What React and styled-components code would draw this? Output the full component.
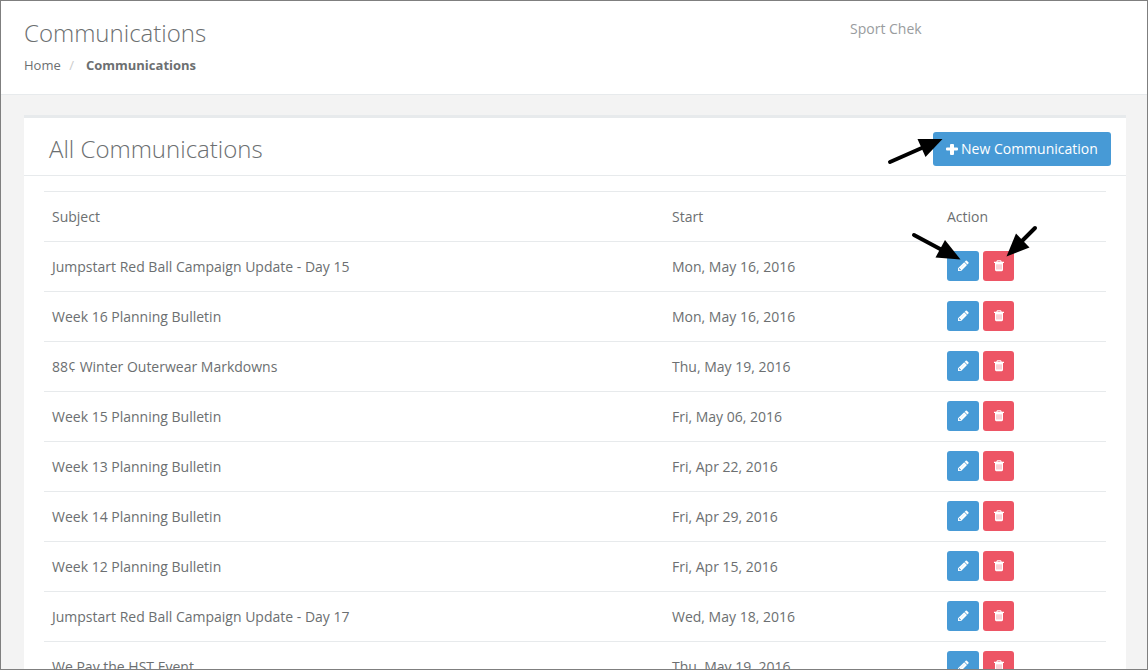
import React from "react";
import styled, { createGlobalStyle } from "styled-components";

const GlobalStyle = createGlobalStyle`
  * { box-sizing: border-box; }
  html, body { margin: 0; padding: 0; overflow: hidden; }
  body {
    font-family: "Open Sans", "Noto Sans", sans-serif;
    font-size: 14px;
    line-height: 20px;
    color: #6c6f71;
    background: #f3f3f3;
  }
`;

const Frame = styled.div`
  position: relative;
  width: 1148px;
  height: 670px;
  overflow: hidden;
  border: 1px solid #7f7f7f;
  background: #f3f3f3;
`;

const PageHeader = styled.header`
  display: flex;
  height: 94px;
  padding: 0 23px;
  background: #fff;
  border-bottom: 1px solid #e7eaec;
`;

const Heading = styled.div`
  width: 826px;
  padding-top: 17px;
`;

const PageTitle = styled.h1`
  margin: 0;
  font-size: 24px;
  font-weight: 300;
  line-height: 30px;
`;

const Breadcrumb = styled.nav`
  display: flex;
  margin-top: 7px;
  font-size: 13px;
  line-height: 20px;
`;

const Separator = styled.span`
  padding: 0 12px 0 8.4px;
  color: #ccc;
`;

const Banner = styled.span`
  padding-top: 18px;
  color: #999c9e;
`;

const Card = styled.main`
  margin: 20px 21px 0 23px;
  height: 700px;
  background: #fff;
  border-top: 3px solid #e7eaec;
`;

const CardHeader = styled.div`
  display: flex;
  justify-content: space-between;
  height: 58px;
  padding: 14px 15px 0 25px;
  border-bottom: 1px solid #e7eaec;
`;

const CardTitle = styled.h2`
  margin: 1px 0 0;
  font-size: 24px;
  font-weight: 300;
  line-height: 32px;
`;

const NewButton = styled.button`
  display: flex;
  align-items: center;
  gap: 3px;
  width: 178px;
  height: 34px;
  padding: 0 0 0 13px;
  border: 0;
  border-radius: 3px;
  background: #479ad6;
  color: #fff;
  font: inherit;
  white-space: nowrap;
`;

const Table = styled.div`
  margin: 15px 20px 0;
`;

const Row = styled.div`
  display: grid;
  grid-template-columns: 620px 275px 167px;
  height: 50px;
  border-top: 1px solid #e7eaec;
`;

const Cell = styled.div`
  padding: 15px 8px 0;
  line-height: 20px;
  white-space: nowrap;
`;

const Actions = styled.div`
  display: flex;
  gap: 4px;
  padding: 9px 8px 0;
`;

const ActionButton = styled.button`
  display: flex;
  align-items: flex-start;
  width: ${(p) => (p.$danger ? "31px" : "32px")};
  height: 30px;
  padding: 9px 0 0 ${(p) => (p.$danger ? "11px" : "10px")};
  border: 0;
  border-radius: 3px;
  color: #fff;
  background: ${(p) => (p.$danger ? "#ed5565" : "#479ad6")};
`;

const Glyph = styled.svg`
  display: block;
  flex: none;
  width: ${(p) => p.$w}px;
  height: ${(p) => p.$h}px;
  fill: currentColor;
`;

const Arrows = styled.svg`
  position: absolute;
  left: -1px;
  top: -1px;
  pointer-events: none;
`;

const Plus = () => (
  <Glyph $w={12} $h={12} viewBox="0 0 12 12">
    <path d="M5 1h2q1 0 1 1v2.4h3q1 0 1 1v1.2q0 1-1 1h-3v3.4q0 1-1 1h-2q-1 0-1-1v-3.4h-3q-1 0-1-1v-1.2q0-1 1-1h3v-2.4q0-1 1-1z" />
  </Glyph>
);

const Pencil = () => (
  <Glyph $w={12} $h={12} viewBox="0 0 12 12">
    <path
      fillRule="evenodd"
      d="M7.2 2.2L10 5L4.1 10.9Q3.9 11.1 3.6 11.1H1V8.5Q1 8.3 1.2 8.1ZM1.9 8.7V9.5H2.7V10.3H3.4L4 9.7L2.5 8.1Z"
    />
    <path d="M7.7 1.7L8.7.7Q9.3.1 9.9.7L11.4 2.2Q12 2.8 11.4 3.4L10.4 4.4Z" />
    <path d="M4 7.7L7.4 4.3" stroke="#479ad6" strokeOpacity=".35" strokeWidth=".5" />
  </Glyph>
);

const Trash = () => (
  <Glyph $w={10} $h={12} viewBox="0 0 10 12">
    <path
      fillRule="evenodd"
      d="M3.4.3h3.2q.5 0 .7.5l.4 1H10v1.2H9v6.8q0 1.4-1.2 1.4H2.2Q1 11.200 1 9.800V3H0V1.800h2.300l.4-1q.2-.5.7-.5zM3.700 1.200L3.400 1.800h3.200L6.300 1.200z"
    />
    <path
      d="M3 4.300v5.200M5 4.300v5.200M7 4.300v5.200"
      stroke="#ed5565"
      strokeOpacity=".7"
      strokeWidth=".8"
    />
  </Glyph>
);

const rows = [
  ["Jumpstart Red Ball Campaign Update - Day 15", "Mon, May 16, 2016"],
  ["Week 16 Planning Bulletin", "Mon, May 16, 2016"],
  ["88¢ Winter Outerwear Markdowns", "Thu, May 19, 2016"],
  ["Week 15 Planning Bulletin", "Fri, May 06, 2016"],
  ["Week 13 Planning Bulletin", "Fri, Apr 22, 2016"],
  ["Week 14 Planning Bulletin", "Fri, Apr 29, 2016"],
  ["Week 12 Planning Bulletin", "Fri, Apr 15, 2016"],
  ["Jumpstart Red Ball Campaign Update - Day 17", "Wed, May 18, 2016"],
  ["We Pay the HST Event", "Thu, May 19, 2016"],
];

export default function App() {
  return (
    <>
      <GlobalStyle />
      <Frame>
        <PageHeader>
          <Heading>
            <PageTitle>Communications</PageTitle>
            <Breadcrumb>
              <span>Home</span>
              <Separator>/</Separator>
              <strong>Communications</strong>
            </Breadcrumb>
          </Heading>
          <Banner>Sport Chek</Banner>
        </PageHeader>
        <Card>
          <CardHeader>
            <CardTitle>All Communications</CardTitle>
            <NewButton>
              <Plus />
              New Communication
            </NewButton>
          </CardHeader>
          <Table>
            <Row>
              <Cell>Subject</Cell>
              <Cell>Start</Cell>
              <Cell>Action</Cell>
            </Row>
            {rows.map(([subject, start], i) => (
              <Row key={i}>
                <Cell>{subject}</Cell>
                <Cell>{start}</Cell>
                <Actions>
                  <ActionButton aria-label="Edit">
                    <Pencil />
                  </ActionButton>
                  <ActionButton $danger aria-label="Delete">
                    <Trash />
                  </ActionButton>
                </Actions>
              </Row>
            ))}
          </Table>
        </Card>
        <Arrows width="1148" height="670" viewBox="0 0 1148 670">
          <g stroke="#000" strokeWidth="4" strokeLinecap="round">
            <path d="M890 162L924 147" />
            <path d="M914 235L942 250" />
            <path d="M1035 228L1020 243" />
          </g>
          <path d="M942.5 139L917.5 139L925.5 157Z" />
          <path d="M960.5 259.5L945 240L935.5 257.5Z" />
          <path d="M1006.5 256.5L1016 233.5L1029.5 247.5Z" />
        </Arrows>
      </Frame>
    </>
  );
}
